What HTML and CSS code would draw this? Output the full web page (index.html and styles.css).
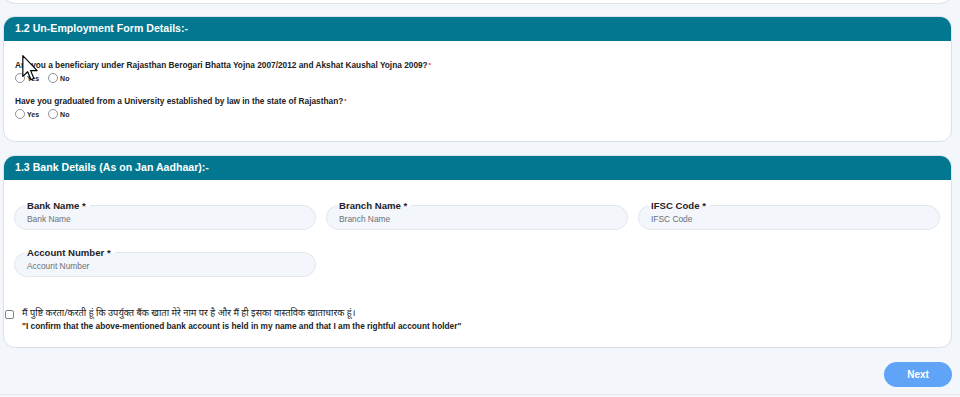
FILE: index.html
```html
<!DOCTYPE html>
<html>
<head>
<meta charset="utf-8">
<link rel="stylesheet" href="styles.css">
</head>
<body>
<div class="page">
  <div class="prev-card"></div>

  <section class="card card-emp">
    <div class="card-head">1.2 Un-Employment Form Details:-</div>
    <div class="card-body emp-body">
      <div class="question">
        <div class="q-text">Are you a beneficiary under Rajasthan Berogari Bhatta Yojna 2007/2012 and Akshat Kaushal Yojna 2009?<span class="req">*</span></div>
        <div class="radios">
          <label class="radio"><span class="dot"></span>Yes</label>
          <label class="radio"><span class="dot"></span>No</label>
        </div>
      </div>
      <div class="question">
        <div class="q-text">Have you graduated from a University established by law in the state of Rajasthan?<span class="req">*</span></div>
        <div class="radios">
          <label class="radio"><span class="dot"></span>Yes</label>
          <label class="radio"><span class="dot"></span>No</label>
        </div>
      </div>
    </div>
  </section>

  <section class="card card-bank">
    <div class="card-head">1.3 Bank Details (As on Jan Aadhaar):-</div>
    <div class="card-body bank-body">
      <div class="fields">
        <div class="field"><span class="f-label">Bank Name *</span><span class="f-ph">Bank Name</span></div>
        <div class="field"><span class="f-label">Branch Name *</span><span class="f-ph">Branch Name</span></div>
        <div class="field"><span class="f-label">IFSC Code *</span><span class="f-ph">IFSC Code</span></div>
        <div class="field"><span class="f-label">Account Number *</span><span class="f-ph">Account Number</span></div>
      </div>
      <div class="confirm">
        <span class="box"></span>
        <div class="confirm-text">
          <div class="hindi">मैं पुष्टि करता/करती हूं कि उपर्युक्त बैंक खाता मेरे नाम पर है और मैं ही इसका वास्तविक खाताधारक हूं।</div>
          <div class="english">"I confirm that the above-mentioned bank account is held in my name and that I am the rightful account holder"</div>
        </div>
      </div>
    </div>
  </section>

  <div class="actions"><button class="next">Next</button></div>
  <div class="footer-line"></div>
</div>
<svg class="cursor" width="16" height="26" viewBox="0 0 12 20"><path d="M0.5 0.5 L0.5 16.5 L4.2 12.9 L6.8 19 L9 18 L6.5 12 L11.5 12 Z" fill="#fff" stroke="#000" stroke-width="0.9" stroke-linejoin="round"/></svg>
</body>
</html>
```
FILE: styles.css
```css
* { box-sizing: border-box; }
html, body { margin: 0; padding: 0; }
body {
  background: #f3f6fa;
  font-family: "Liberation Sans", Arial, "Noto Sans", sans-serif;
  color: #111;
  width: 960px;
  height: 397px;
  overflow: hidden;
  position: relative;
}
.page { padding: 0 8px 0 3px; }

.prev-card {
  height: 14px;
  margin-top: -10px;
  background: #fff;
  border: 1px solid #dfe4ea;
  border-top: none;
  border-radius: 0 0 12px 12px;
}

.card {
  background: #fff;
  border: 1px solid #dbe1e8;
  border-radius: 12px;
  overflow: hidden;
}
.card-emp { margin-top: 12px; height: 126px; }
.card-bank { margin-top: 13px; height: 193px; }

.card-head {
  background: #02778f;
  color: #fff;
  font-weight: bold;
  font-size: 10.6px;
  height: 25px;
  line-height: 25px;
  padding-left: 12px;
  margin: -1px -1px 0 -1px;
  border-radius: 12px 12px 0 0;
}

.emp-body { padding: 19px 12px 0 11px; display: flex; flex-direction: column; gap: 13px; }
.q-text { font-size: 8.3px; font-weight: bold; line-height: 10px; color: #222; }
.req { color: #e11d1d; font-size: 6px; vertical-align: top; margin-left: 1px; }
.radios { display: flex; gap: 9px; margin-top: 3px; }
.radio { display: flex; align-items: center; gap: 2px; font-size: 7px; font-weight: bold; color: #222; }
.dot { width: 10px; height: 10px; border: 1px solid #8d939a; border-radius: 50%; background: #fff; display: inline-block; }

.bank-body { padding: 25px 11px 0 0; }
.fields {
  display: grid;
  grid-template-columns: repeat(3, 302px);
  column-gap: 10px;
  row-gap: 22px;
  padding-left: 10px;
}
.field {
  position: relative;
  height: 25px;
  border: 1px solid #e2e7ee;
  border-radius: 13px;
  background: #f3f6fa;
  padding: 7px 0 0 12px;
}
.f-label {
  position: absolute;
  top: -6px;
  left: 9px;
  padding: 0 4px 0 3px;
  font-size: 9.6px;
  font-weight: bold;
  line-height: 11px;
  color: #1f2328;
  background: linear-gradient(#fff 55%, rgba(243,246,250,0) 55%);
}
.f-ph { display: block; font-size: 8.4px; color: #6b7078; line-height: 12px; }

.confirm { display: flex; align-items: flex-start; gap: 8px; margin-top: 29px; padding-left: 1px; }
.box { width: 9px; height: 9px; border: 1px solid #7d838a; border-radius: 2px; background: #fff; margin-top: 4px; flex: none; }
.hindi { font-size: 9.3px; line-height: 14px; color: #222; font-family: "Noto Sans", "Liberation Sans", sans-serif; }
.english { font-size: 8.3px; font-weight: bold; line-height: 12px; color: #222; }

.actions { display: flex; justify-content: flex-end; margin-top: 14px; }
.next {
  width: 68px;
  height: 25px;
  border: none;
  border-radius: 13px;
  background: #60a4f8;
  color: #fff;
  font-family: "Liberation Sans", Arial, sans-serif;
  font-size: 10px;
  font-weight: bold;
}
.footer-line { margin: 7px -8px 0 -3px; border-top: 1px solid #e4e8ee; }

.cursor { position: absolute; left: 22px; top: 55px; }
```
